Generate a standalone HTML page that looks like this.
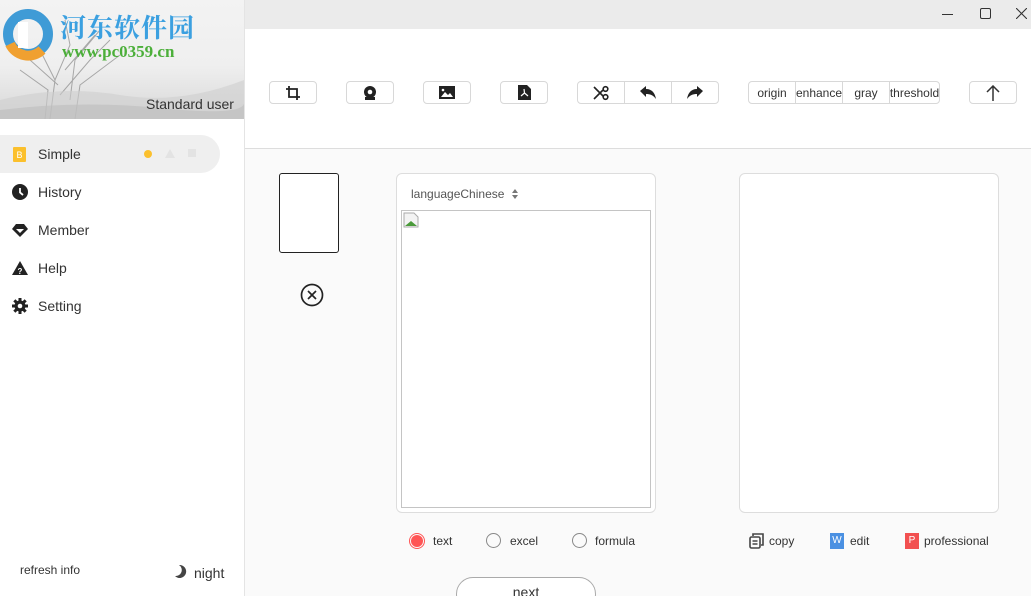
<!DOCTYPE html>
<html><head><meta charset="utf-8"><style>
*{box-sizing:border-box;margin:0;padding:0}
html,body{width:1031px;height:596px;overflow:hidden}
body{font-family:"Liberation Sans","Noto Sans CJK SC",sans-serif;background:#fafafa;color:#333}
#wrap{position:relative;width:1031px;height:596px;overflow:hidden}
.abs{position:absolute}
#side{left:0;top:0;width:245px;height:596px;background:#fff;border-right:1px solid #e4e4e4}
#hdr{left:0;top:0;width:244px;height:119px;background:linear-gradient(180deg,#f3f3f3 0%,#efefef 55%,#e2e2e2 80%,#d6d6d6 100%);overflow:hidden}
.nav{left:0;width:220px;height:38px;display:flex;align-items:center;padding-left:12px;font-size:14px;color:#333}
.nav svg{margin-right:10px}
#title{left:245px;top:0;width:786px;height:29px;background:#ebebeb}
#tool{left:245px;top:29px;width:786px;height:120px;background:#fff;border-bottom:1px solid #ddd}
.btn{position:absolute;top:81px;height:23px;border:1px solid #d8d8d8;border-radius:4px;background:#fff;display:flex;align-items:center;justify-content:center}
.seg{display:flex;align-items:center;justify-content:center;height:100%;border-right:1px solid #d8d8d8;font-size:12px;color:#333}
.seg:last-child{border-right:none}
.radio{width:15px;height:15px;border:1px solid #888;border-radius:50%;display:inline-block}
.lab{font-size:12px;color:#333;position:absolute;top:534px}
</style></head><body><div id="wrap">
<div id="side" class="abs">
 <div id="hdr" class="abs">
  <svg class="abs" style="left:0;top:0" width="244" height="119">
   <g stroke="#8a8a8a" stroke-width="1" fill="none" opacity="0.7">
    <path d="M50 119L55 80L40 50M55 80L70 45L65 20M60 95L90 60L110 40M58 85L30 60M65 70L95 35M70 100L75 60L100 30"/>
    <path d="M45 119L48 90L20 70M75 119L80 85L120 55"/>
   </g>
   <path d="M0 100Q60 85 120 95T244 80V119H0Z" fill="#cfcfcf" opacity="0.6"/>
   <path d="M0 110Q80 100 160 108T244 104V119H0Z" fill="#bdbdbd" opacity="0.6"/>
  </svg>
  <svg class="abs" style="left:2px;top:6px" width="56" height="56" viewBox="0 0 56 56"><circle cx="26" cy="28" r="20" fill="none" stroke="#3f9bd6" stroke-width="10"/><path d="M8 38 A20 20 0 0 0 40 44" fill="none" stroke="#f0a030" stroke-width="10"/><rect x="16" y="16" width="10" height="26" fill="#fff"/></svg>
  <div class="abs" style="left:60px;top:8px;font-size:26px;font-weight:bold;color:#3ba0e0;font-family:'Noto Serif CJK SC','Noto Sans CJK SC',serif;letter-spacing:1px">河东软件园</div>
  <div class="abs" style="left:62px;top:42px;font-size:17px;font-weight:bold;color:#4caf3a;font-family:'Liberation Serif',serif">www.pc0359.cn</div>
  <div class="abs" style="left:146px;top:96px;font-size:14px;color:#333">Standard user</div>
 </div>
 <div class="abs" style="left:0;top:135px;width:220px;height:38px;background:#efefef;border-radius:0 19px 19px 0"></div>
 <div class="nav abs" style="top:135px"><svg width="16" height="16"><rect x="1" y="1" width="13" height="15" rx="1" fill="#fbc02d"/><text x="4.5" y="12" font-size="9" fill="#fff" font-family="Liberation Sans">B</text></svg>Simple</div>
 <div class="abs" style="left:144px;top:150px;width:8px;height:8px;border-radius:50%;background:#fbc02d"></div>
 <svg class="abs" style="left:165px;top:149px" width="10" height="9"><path d="M5 0L10 9H0Z" fill="#e3e3e3"/></svg>
 <div class="abs" style="left:188px;top:149px;width:8px;height:8px;background:#e3e3e3"></div>
 <div class="nav abs" style="top:173px"><svg width="16" height="16"><circle cx="8" cy="8" r="8" fill="#222"/><path d="M8 4V8.5L11 11" stroke="#fff" stroke-width="1.8" fill="none"/></svg>History</div>
 <div class="nav abs" style="top:211px"><svg width="16" height="16"><path d="M4 2H12L16 7L8 15L0 7Z" fill="#222"/><path d="M4 7H12L8 11Z" fill="#fff"/></svg>Member</div>
 <div class="nav abs" style="top:249px"><svg width="16" height="16"><path d="M8 1L16 15H0Z" fill="#222"/><text x="5.5" y="14" font-size="8" fill="#fff" font-weight="bold" font-family="Liberation Sans">?</text></svg>Help</div>
 <div class="nav abs" style="top:287px"><svg width="16" height="16" viewBox="0 0 16 16"><g fill="#222"><circle cx="8" cy="8" r="5.5"/><rect x="6.5" y="0" width="3" height="16"/><rect x="0" y="6.5" width="16" height="3"/><rect x="6.5" y="0" width="3" height="16" transform="rotate(45 8 8)"/><rect x="6.5" y="0" width="3" height="16" transform="rotate(-45 8 8)"/></g><circle cx="8" cy="8" r="2.3" fill="#fff"/></svg>Setting</div>
 <div class="abs" style="left:20px;top:563px;font-size:12px;color:#333">refresh info</div>
 <svg class="abs" style="left:174px;top:564px" width="14" height="14"><path d="M5 1A6.5 6.5 0 1 1 1 12A6 6 0 0 0 5 1Z" fill="#444"/></svg>
 <div class="abs" style="left:194px;top:565px;font-size:14px;color:#333">night</div>
</div>
<div id="title" class="abs">
 <div class="abs" style="left:697px;top:14px;width:11px;height:1px;background:#333"></div>
 <div class="abs" style="left:735px;top:8px;width:11px;height:11px;border:1px solid #333;border-radius:2px"></div>
 <svg class="abs" style="left:771px;top:8px" width="11" height="11" stroke="#333" stroke-width="1.1"><path d="M0 0L11 11M11 0L0 11"/></svg>
</div>
<div id="tool" class="abs"></div>
<div class="btn" style="left:269px;width:48px"><svg width="14" height="14" viewBox="0 0 14 14" fill="none" stroke="#222" stroke-width="1.8"><path d="M3 0V11H14M0 3H11V14"/></svg></div>
<div class="btn" style="left:346px;width:48px"><svg width="14" height="14" viewBox="0 0 14 14"><circle cx="7" cy="6" r="6" fill="#222"/><circle cx="7" cy="6" r="2.3" fill="#fff"/><rect x="2" y="11" width="10" height="3" fill="#222"/></svg></div>
<div class="btn" style="left:423px;width:48px"><svg width="16" height="13"><rect width="16" height="13" fill="#222"/><path d="M2 11L6 6L9 9L11 7L14 11Z" fill="#fff"/><circle cx="4" cy="4" r="1.3" fill="#fff"/></svg></div>
<div class="btn" style="left:500px;width:48px"><svg width="13" height="15"><path d="M0 0H9L13 4V15H0Z" fill="#222"/><path d="M6 4L6.5 8L3 11M6.5 8L10 11" stroke="#fff" stroke-width="1.2" fill="none"/></svg></div>
<div class="btn" style="left:577px;width:142px">
 <div class="seg" style="width:47px"><svg width="16" height="16" viewBox="0 0 16 16" fill="none" stroke="#222" stroke-width="1.6"><path d="M1 2L10 11M1 14L10 5"/><circle cx="12.5" cy="4" r="2.3"/><circle cx="12.5" cy="12" r="2.3"/></svg></div>
 <div class="seg" style="width:47px"><svg width="16" height="14"><path d="M0 5L6 0V3C12 3 15 7 16 13C13 9 10 8 6 8V11Z" fill="#222"/></svg></div>
 <div class="seg" style="width:46px"><svg width="16" height="14"><path d="M16 5L10 0V3C4 3 1 7 0 13C3 9 6 8 10 8V11Z" fill="#222"/></svg></div>
</div>
<div class="btn" style="left:748px;width:192px">
 <div class="seg" style="width:47px">origin</div><div class="seg" style="width:47px">enhance</div><div class="seg" style="width:47px">gray</div><div class="seg" style="width:49px">threshold</div>
</div>
<div class="btn" style="left:969px;width:48px"><svg width="14" height="16" fill="none" stroke="#333" stroke-width="1.5"><path d="M7 16V1M1 7L7 1L13 7"/></svg></div>
<div class="abs" style="left:279px;top:173px;width:60px;height:80px;border:1px solid #222;border-radius:3px;background:#fff"></div>
<svg class="abs" style="left:300px;top:283px" width="24" height="24" fill="none" stroke="#222" stroke-width="1.7"><circle cx="12" cy="12" r="10.5"/><path d="M8 8L16 16M16 8L8 16"/></svg>
<div class="abs" style="left:396px;top:173px;width:260px;height:340px;border:1px solid #ddd;border-radius:6px;background:#fff"></div>
<div class="abs" style="left:411px;top:187px;font-size:12px;color:#555">languageChinese</div>
<svg class="abs" style="left:512px;top:189px" width="6" height="10" fill="#777"><path d="M3 0L6 4H0ZM3 10L6 6H0Z"/></svg>
<div class="abs" style="left:401px;top:210px;width:250px;height:298px;border:1px solid #c4c4c4"></div>
<svg class="abs" style="left:403px;top:212px" width="16" height="16"><path d="M1 1H11L15 5V15H1Z" fill="#f3f3f3" stroke="#aaa"/><path d="M2 14L8 9L14 14Z" fill="#4a9a3a"/></svg>
<div class="abs" style="left:739px;top:173px;width:260px;height:340px;border:1px solid #ddd;border-radius:6px;background:#fff"></div>
<div class="abs" style="left:409px;top:533px;width:16px;height:16px;border-radius:50%;border:1px solid #f55;padding:1px"><div style="width:12px;height:12px;border-radius:50%;background:#f55"></div></div>
<div class="lab" style="left:433px">text</div>
<span class="radio abs" style="left:486px;top:533px"></span><div class="lab" style="left:510px">excel</div>
<span class="radio abs" style="left:572px;top:533px"></span><div class="lab" style="left:595px">formula</div>
<svg class="abs" style="left:749px;top:533px" width="15" height="16" fill="none" stroke="#444" stroke-width="1.6"><rect x="1" y="4" width="10" height="11" rx="1.5"/><path d="M4 3V1H14V12H12M3.5 8H8.5M3.5 11H8.5"/></svg>
<div class="lab" style="left:769px">copy</div>
<div class="abs" style="left:830px;top:533px;width:14px;height:16px;background:#4a90e2;color:#fff;font-size:10px;text-align:center;line-height:16px">W</div>
<div class="lab" style="left:850px">edit</div>
<div class="abs" style="left:905px;top:533px;width:14px;height:16px;background:#f25050;color:#fff;font-size:10px;text-align:center;line-height:16px">P</div>
<div class="lab" style="left:924px">professional</div>
<div class="abs" style="left:456px;top:577px;width:140px;height:34px;border:1px solid #aaa;border-radius:17px;background:#fff;text-align:center;font-size:14px;line-height:28px;color:#333">next</div>
</div></body></html>
